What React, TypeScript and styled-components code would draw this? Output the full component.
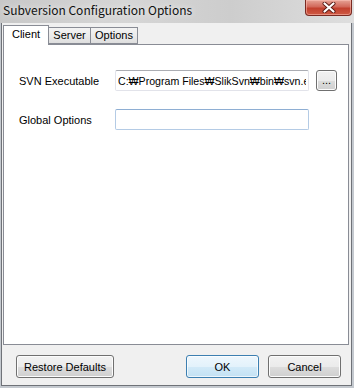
import React from "react";
import styled, { createGlobalStyle } from "styled-components";

const GlobalStyle = createGlobalStyle`
  html, body {
    margin: 0;
    padding: 0;
    background: #ffffff;
  }
  * {
    box-sizing: border-box;
  }
`;

const Window = styled.div`
  width: 354px;
  height: 388px;
  display: flex;
  flex-direction: column;
  background: #c4c9cf;
  font-family: "Liberation Sans", Arial, sans-serif;
  font-size: 11px;
  color: #000;
`;

const TitleBar = styled.div`
  height: 23px;
  flex: 0 0 23px;
  display: flex;
  align-items: flex-start;
  justify-content: space-between;
  background: linear-gradient(90deg, #c8c8c8 0%, #d6d6d6 35%, #cdcdcd 65%, #dedede 100%);
`;

const Title = styled.div`
  font-family: "Noto Sans CJK KR", "Liberation Sans", sans-serif;
  font-size: 12px;
  line-height: 20px;
  padding: 0 0 0 3px;
  color: #111;
  text-shadow: 0 0 6px rgba(255, 255, 255, 0.9);
`;

const CloseButton = styled.div`
  width: 47px;
  height: 16px;
  margin-right: 2px;
  border: 1px solid #7a2a22;
  border-top: none;
  border-radius: 0 0 4px 4px;
  background: linear-gradient(180deg, #e6a396 0%, #d2685a 45%, #c2402e 55%, #cf5a44 100%);
  display: flex;
  align-items: center;
  justify-content: center;
  box-shadow: inset 0 0 0 1px rgba(255, 200, 190, 0.5);
`;

const Client = styled.div`
  flex: 1;
  margin: 0 2px 2px 1px;
  border: 1px solid #6f7278;
  border-top: none;
  background: #f0f0f0;
  display: flex;
  flex-direction: column;
`;

const TabStrip = styled.div`
  height: 21px;
  flex: 0 0 21px;
  padding: 2px 0 0 1px;
  display: flex;
  align-items: flex-end;
`;

const Tab = styled.div<{ $active?: boolean; $width: number }>`
  width: ${p => p.$width}px;
  height: ${p => (p.$active ? 20 : 17)}px;
  margin-bottom: ${p => (p.$active ? -1 : 0)}px;
  border: 1px solid #898c95;
  border-bottom: ${p => (p.$active ? "none" : "1px solid #898c95")};
  margin-left: ${p => (p.$active ? 0 : -1)}px;
  background: ${p =>
    p.$active ? "#ffffff" : "linear-gradient(180deg, #f3f3f3 0%, #ebebeb 50%, #dedede 100%)"};
  position: relative;
  z-index: ${p => (p.$active ? 2 : 1)};
  display: flex;
  align-items: center;
  justify-content: center;
  padding-bottom: ${p => (p.$active ? 2 : 0)}px;
  line-height: 1;
`;

const Panel = styled.div`
  height: 301px;
  flex: 0 0 301px;
  margin: 0 2px 0 1px;
  border: 1px solid #898c95;
  background: #ffffff;
  padding: 25px 0 0 15px;
  display: flex;
  flex-direction: column;
  gap: 18px;
`;

const Row = styled.div`
  display: flex;
  align-items: center;
  height: 21px;
`;

const Label = styled.div`
  width: 96px;
  flex: 0 0 96px;
`;

const TextBox = styled.input<{ $hover?: boolean }>`
  width: 194px;
  height: 21px;
  padding: 0 2px;
  margin: 0;
  font-family: "Liberation Sans", "DejaVu Sans", sans-serif;
  font-size: 10.6px;
  color: #000;
  background: #fff;
  border: 1px solid ${p => (p.$hover ? "#b4cbe5" : "#e2e3ea")};
  border-top-color: ${p => (p.$hover ? "#8eaed3" : "#abadb3")};
  border-radius: 2px;
  outline: none;
`;

const Button = styled.div<{ $default?: boolean; $width: number; $height?: number }>`
  width: ${p => p.$width}px;
  height: ${p => p.$height ?? 23}px;
  border: 1px solid ${p => (p.$default ? "#3c7fb1" : "#707070")};
  border-radius: 3px;
  background: ${p =>
    p.$default
      ? "linear-gradient(180deg, #eef7fd 0%, #e3f2fb 50%, #d2eaf8 51%, #c3e1f3 100%)"
      : "linear-gradient(180deg, #f2f2f2 0%, #ebebeb 50%, #dddddd 51%, #cfcfcf 100%)"};
  box-shadow: inset 0 0 0 1px ${p => (p.$default ? "rgba(255,255,255,0.7)" : "#fcfcfc")};
  display: flex;
  align-items: center;
  justify-content: center;
  color: #000;
`;

const BrowseButton = styled(Button)`
  margin-left: 7px;
  align-items: flex-end;
  padding-bottom: 4px;
  line-height: 1;
`;

const ButtonBar = styled.div`
  flex: 1;
  display: flex;
  align-items: flex-start;
  padding: 10px 10px 0 14px;
  gap: 9px;
`;

const Spacer = styled.div`
  flex: 1;
`;

function CloseGlyph() {
  return (
    <svg width="14" height="11" viewBox="0 0 14 11">
      <path d="M2.5 1.5 L11.5 9.5 M11.5 1.5 L2.5 9.5" stroke="#5a1a14" strokeWidth="4" strokeLinecap="round" />
      <path d="M2.5 1.5 L11.5 9.5 M11.5 1.5 L2.5 9.5" stroke="#ffffff" strokeWidth="2.2" strokeLinecap="round" />
    </svg>
  );
}

export default function App() {
  return (
    <Window>
      <GlobalStyle />
      <TitleBar>
        <Title>Subversion Configuration Options</Title>
        <CloseButton>
          <CloseGlyph />
        </CloseButton>
      </TitleBar>
      <Client>
        <TabStrip>
          <Tab $active $width={46}>Client</Tab>
          <Tab $width={43}>Server</Tab>
          <Tab $width={48}>Options</Tab>
        </TabStrip>
        <Panel>
          <Row>
            <Label>SVN Executable</Label>
            <TextBox readOnly defaultValue="C:₩Program Files₩SlikSvn₩bin₩svn.exe" />
            <BrowseButton $width={21} $height={21}>...</BrowseButton>
          </Row>
          <Row>
            <Label>Global Options</Label>
            <TextBox $hover readOnly defaultValue="" />
          </Row>
        </Panel>
        <ButtonBar>
          <Button $width={98}>Restore Defaults</Button>
          <Spacer />
          <Button $default $width={73}>OK</Button>
          <Button $width={73}>Cancel</Button>
        </ButtonBar>
      </Client>
    </Window>
  );
}
